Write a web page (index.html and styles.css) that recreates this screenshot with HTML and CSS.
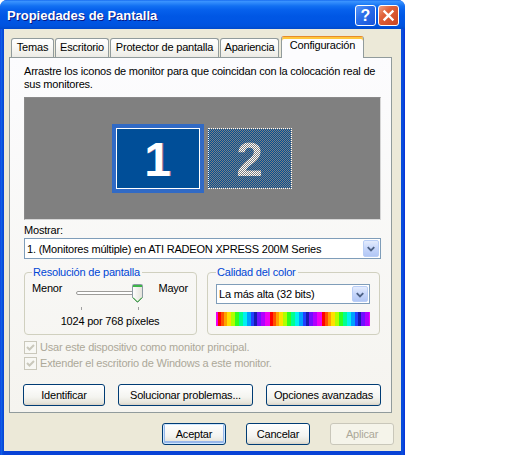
FILE: index.html
```html
<!DOCTYPE html>
<html lang="es">
<head>
<meta charset="utf-8">
<title>Propiedades de Pantalla</title>
<link rel="stylesheet" href="styles.css">
</head>
<body>
<div class="window">
  <div class="titlebar">
    <span class="title">Propiedades de Pantalla</span>
    <span class="tb-btn help">?</span>
    <span class="tb-btn close"><svg width="19" height="19" viewBox="0 0 19 19"><path d="M5.5 5.5 L13.5 13.5 M13.5 5.5 L5.5 13.5" stroke="#fff" stroke-width="2.4" stroke-linecap="square"/></svg></span>
  </div>
  <div class="client">
    <div class="tabs">
      <div class="tab w-temas">Temas</div>
      <div class="tab w-escr">Escritorio</div>
      <div class="tab w-prot">Protector de pantalla</div>
      <div class="tab w-apar">Apariencia</div>
      <div class="tab active w-conf">Configuración</div>
    </div>
    <div class="panel">
      <p class="desc">Arrastre los iconos de monitor para que coincidan con la colocación real de sus monitores.</p>
      <div class="arrange">
        <div class="mon mon1"><span>1</span></div>
        <div class="mon mon2"><span>2</span></div>
      </div>
      <div class="label">Mostrar:</div>
      <div class="combo">
        <span class="combo-text">1. (Monitores múltiple) en ATI RADEON XPRESS 200M Series</span>
        <span class="ddbtn"><svg width="15" height="15" viewBox="0 0 15 15"><path d="M4 6 L7.5 9.5 L11 6" stroke="#4D6185" stroke-width="2" fill="none"/></svg></span>
      </div>
      <div class="groups">
        <fieldset class="group res">
          <legend>Resolución de pantalla</legend>
          <div class="slider-row">
            <span>Menor</span>
            <div class="slider">
              <div class="track"></div>
              <svg class="thumb" width="11" height="19" viewBox="0 0 11 19">
                <defs><linearGradient id="tg" x1="0" y1="0" x2="1" y2="0"><stop offset="0" stop-color="#fff"/><stop offset="1" stop-color="#E3E2DA"/></linearGradient></defs>
                <path d="M.5 1.5 Q.5 .5 1.5 .5 H9.5 Q10.5 .5 10.5 1.5 V13.5 L5.5 18.5 L.5 13.5 Z" fill="url(#tg)" stroke="#8C9AA4"/>
                <rect x="1" y="1" width="9" height="2" fill="#3EB549"/>
                <path d="M1 13.5 L5.5 18 L10 13.5" stroke="#21A121" fill="none"/>
              </svg>
              <div class="ticks"><i></i><i></i></div>
            </div>
            <span>Mayor</span>
          </div>
          <div class="res-text">1024 por 768 píxeles</div>
        </fieldset>
        <fieldset class="group color">
          <legend>Calidad del color</legend>
          <div class="combo small">
            <span class="combo-text">La más alta (32 bits)</span>
            <span class="ddbtn"><svg width="15" height="15" viewBox="0 0 15 15"><path d="M4 6 L7.5 9.5 L11 6" stroke="#4D6185" stroke-width="2" fill="none"/></svg></span>
          </div>
          <div class="colorbar"></div>
        </fieldset>
      </div>
      <div class="checks">
        <div class="check"><span class="box"><svg width="11" height="11" viewBox="0 0 11 11"><path d="M2 5 L4.5 7.5 L9 3" stroke="#CAC8BB" stroke-width="2" fill="none"/></svg></span>Usar este dispositivo como monitor principal.</div>
        <div class="check"><span class="box"><svg width="11" height="11" viewBox="0 0 11 11"><path d="M2 5 L4.5 7.5 L9 3" stroke="#CAC8BB" stroke-width="2" fill="none"/></svg></span>Extender el escritorio de Windows a este monitor.</div>
      </div>
      <div class="panel-buttons">
        <button class="btn b-ident">Identificar</button>
        <button class="btn b-sol">Solucionar problemas...</button>
        <button class="btn b-opc">Opciones avanzadas</button>
      </div>
    </div>
    <div class="dialog-buttons">
      <button class="btn dlg default">Aceptar</button>
      <button class="btn dlg">Cancelar</button>
      <button class="btn dlg disabled">Aplicar</button>
    </div>
  </div>
</div>
</body>
</html>
```
FILE: styles.css
```css
body {
  margin: 0;
  background: #fff;
  font-family: "Liberation Sans", Arial, sans-serif;
  font-size: 11px;
  letter-spacing: -0.2px;
  color: #000;
}
.window {
  width: 405px;
  height: 455px;
  display: flex;
  flex-direction: column;
  background: linear-gradient(90deg, #0831D9 0, #166AEE 1px, #0855DD 2px, #0842D6 4px, #0842D6 401px, #0855DD 402px, #0831D9 405px);
  border-radius: 7px 7px 0 0;
}
.titlebar {
  height: 29px;
  flex: none;
  display: flex;
  align-items: flex-start;
  padding: 5px 6px 0 7px;
  box-sizing: border-box;
  border-radius: 7px 7px 0 0;
  background: linear-gradient(#0A5DEA 0, #3D95FF 1px, #2D88FA 3px, #1270F2 6px, #0660EC 10px, #0057E5 16px, #0055E3 22px, #0053DD 26px, #0049CC 29px);
}
.title {
  flex: 1;
  color: #fff;
  font-weight: bold;
  font-size: 13px;
  letter-spacing: 0;
  line-height: 17px;
  padding-top: 2px;
  text-shadow: 1px 1px 0 #0A1883;
}
.tb-btn {
  width: 21px;
  height: 21px;
  box-sizing: border-box;
  border: 1px solid #fff;
  border-radius: 3px;
  display: flex;
  align-items: center;
  justify-content: center;
}
.help {
  margin-right: 2px;
  background: linear-gradient(135deg, #5A97FA 0, #2B6FEA 40%, #1853D9 100%);
  color: #fff;
  font-weight: bold;
  font-size: 16px;
  letter-spacing: 0;
  line-height: 19px;
}
.close {
  background: linear-gradient(135deg, #F0A082 0, #E0623A 35%, #CC4420 100%);
}
.client {
  flex: 1;
  margin: 0 4px 4px 4px;
  background: #ECE9D8;
  display: flex;
  flex-direction: column;
}
.tabs {
  display: flex;
  align-items: flex-end;
  height: 21px;
  margin: 7px 0 0 7px;
}
.tab {
  height: 19px;
  box-sizing: border-box;
  border: 1px solid #919B9C;
  border-bottom: none;
  border-radius: 3px 3px 0 0;
  background: linear-gradient(#FFFFFF, #FAFAF7 40%, #ECEBE5);
  text-align: center;
  line-height: 17px;
  margin-right: 1px;
  white-space: nowrap;
}
.w-temas { width: 43px; }
.w-escr { width: 54px; }
.w-prot { width: 109px; }
.w-apar { width: 59px; }
.w-conf { width: 83px; }
.tab.active {
  height: 22px;
  margin-bottom: -1px;
  margin-left: 1px;
  background: #FCFCFE;
  border-top-color: #E68B2C;
  box-shadow: inset 0 2px 0 #FFC73C;
  position: relative;
  z-index: 1;
}
.panel {
  width: 383px;
  height: 356px;
  margin-left: 5px;
  box-sizing: border-box;
  border: 1px solid #919B9C;
  background: linear-gradient(#FCFCFE, #F5F4EF);
  padding: 7px 10px 0 14px;
}
.desc {
  margin: 0;
  line-height: 13px;
}
.arrange {
  margin-top: 6px;
  height: 123px;
  box-sizing: border-box;
  background: #808080;
  border: 1px solid;
  border-color: #8A8A8A #D6D6D6 #D6D6D6 #8A8A8A;
  display: flex;
  align-items: center;
  justify-content: center;
  gap: 4px;
}
.mon {
  box-sizing: border-box;
  display: flex;
  align-items: center;
  justify-content: center;
  font-family: "Liberation Sans", Arial, sans-serif;
  font-weight: bold;
  font-size: 48px;
  letter-spacing: 0;
  line-height: 1;
}
.mon1 {
  width: 92px;
  height: 69px;
  border: 4px solid #316AC5;
  background: #004E98;
  box-shadow: inset 0 0 0 1px #fff;
  color: #fff;
  text-shadow: 1px 0 0 rgba(230, 140, 150, 0.7);
}
.mon2 {
  width: 84px;
  height: 61px;
  border: 1px dotted #fff;
  background: repeating-conic-gradient(#004E98 0 25%, #808080 0 50%) 0 0 / 2px 2px;
  margin-right: 2px;
}
.mon2 span {
  color: transparent;
  background: repeating-conic-gradient(#ffffff 0 25%, #808080 0 50%) 0 0 / 2px 2px;
  -webkit-background-clip: text;
  background-clip: text;
}
.mon span { padding-top: 3px; }
.label {
  margin-top: 4px;
  line-height: 13px;
}
.combo {
  margin-top: 1px;
  height: 21px;
  box-sizing: border-box;
  border: 1px solid #7F9DB9;
  background: #fff;
  display: flex;
  align-items: center;
  padding-left: 2px;
}
.combo-text { flex: 1; white-space: nowrap; }
.ddbtn {
  width: 16px;
  height: 17px;
  margin-right: 1px;
  box-sizing: border-box;
  border: 1px solid #B9CEF6;
  border-radius: 2px;
  background: linear-gradient(#E4ECFD, #C6D6FB 50%, #B2C7F5);
  display: flex;
  align-items: center;
  justify-content: center;
}
.groups {
  display: flex;
  gap: 10px;
  margin-top: 7px;
}
.group {
  flex: none;
  width: 173px;
  height: 69px;
  box-sizing: border-box;
  margin: 0;
  padding: 3px 8px 0 7px;
  border: 1px solid #D0D0BF;
  border-radius: 4px;
  min-width: 0;
}
.group.color { padding-left: 8px; }
.group legend {
  padding: 0 2px 0 1px;
  line-height: 13px;
  color: #0046D5;
}
.slider-row {
  display: flex;
  justify-content: space-between;
  height: 30px;
  line-height: 13px;
}
.slider {
  width: 72px;
  height: 30px;
  position: relative;
}
.track {
  position: absolute;
  left: 2px;
  right: 4px;
  top: 9px;
  height: 4px;
  box-sizing: border-box;
  border: 1px solid #9D9C99;
  border-radius: 2px;
  background: #fff;
}
.thumb {
  position: absolute;
  left: 58px;
  top: 2px;
}
.ticks {
  position: absolute;
  left: 7px;
  top: 25px;
  width: 58px;
  display: flex;
  justify-content: space-between;
}
.ticks i {
  width: 1px;
  height: 3px;
  background: #A0A0A0;
}
.res-text {
  margin-top: 3px;
  text-align: center;
  line-height: 13px;
}
.combo.small {
  margin-top: 2px;
  width: 154px;
  height: 20px;
}
.combo.small .ddbtn { height: 16px; }
.colorbar {
  margin-top: 8px;
  width: 154px;
  height: 14px;
  background: repeating-linear-gradient(90deg,
    #FF0000 0 3px, #FF5000 3px 6px, #FFA000 6px 9px, #FFE000 9px 13px,
    #B0FF00 13px 17px, #30FF20 17px 21px, #00FF90 21px 25px, #00F0F0 25px 29px,
    #00A0FF 29px 33px, #2040FF 33px 36px, #1818B0 36px 39px, #7010FF 39px 43px,
    #B000FF 43px 47px, #F000F0 47px 52px) 2px 0 / 52px 14px;
  background-repeat: repeat-x;
}
.checks {
  margin-top: 4px;
  color: #ACA899;
}
.check {
  height: 16px;
  display: flex;
  align-items: center;
  line-height: 13px;
}
.box {
  width: 13px;
  height: 13px;
  box-sizing: border-box;
  border: 1px solid #CAC8BB;
  background: #F8F8F4;
  margin-right: 3px;
  display: flex;
  align-items: center;
  justify-content: center;
}
.panel-buttons {
  margin-top: 13px;
  display: flex;
  justify-content: space-between;
}
.btn {
  height: 22px;
  box-sizing: border-box;
  border: 1px solid #003C74;
  border-radius: 3px;
  background: linear-gradient(#FFFFFF, #F4F4F0 60%, #E6E4DA 90%, #D6D0C5);
  font-family: "Liberation Sans", Arial, sans-serif;
  font-size: 11px;
  letter-spacing: -0.2px;
  color: #000;
  padding: 0;
  margin: 0;
}
.b-ident { width: 82px; margin-left: -1px; }
.b-sol { width: 135px; }
.b-opc { width: 115px; }
.dialog-buttons {
  margin-top: 10px;
  display: flex;
  justify-content: flex-end;
  gap: 20px;
  padding-right: 7px;
}
.btn.dlg { width: 64px; height: 22px; }
.btn.default {
  box-shadow: inset 0 0 0 1px #CEE7FF, inset 0 -1px 0 2px #98B8EA;
}
.btn.disabled {
  border-color: #C9C7BA;
  background: #F5F4EA;
  color: #ACA899;
}
```
